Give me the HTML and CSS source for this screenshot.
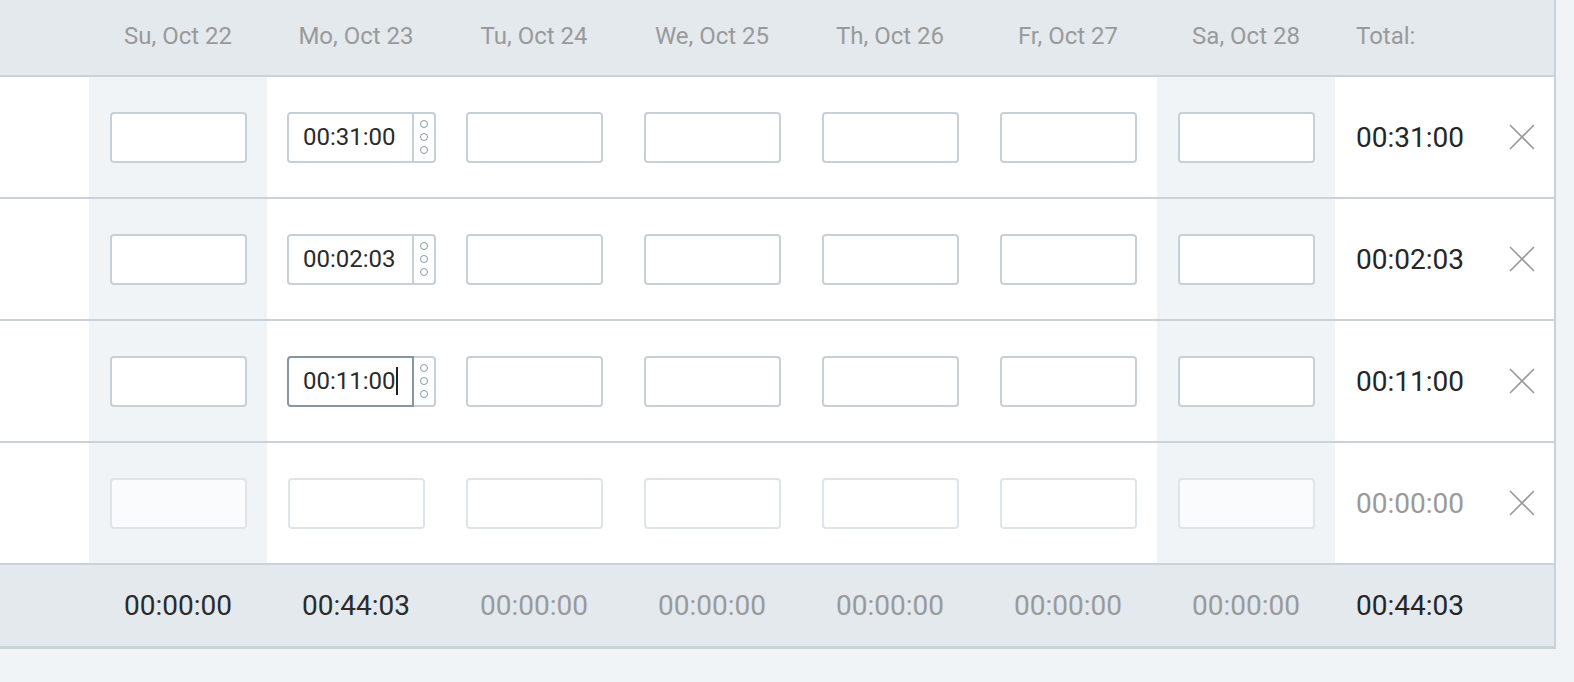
FILE: index.html
```html
<!DOCTYPE html>
<html>
<head>
  <title>Timesheet - Week</title>
  <link rel="stylesheet" href="styles.css">
</head>
<body>
  <div class="timesheet">
    <div class="ts-row ts-head">
      <div class="cell cell-name"></div>
      <div class="cell day">Su, Oct 22</div>
      <div class="cell day">Mo, Oct 23</div>
      <div class="cell day">Tu, Oct 24</div>
      <div class="cell day">We, Oct 25</div>
      <div class="cell day">Th, Oct 26</div>
      <div class="cell day">Fr, Oct 27</div>
      <div class="cell day">Sa, Oct 28</div>
      <div class="cell total">Total:</div>
      <div class="cell action"></div>
    </div>

    <div class="ts-row">
      <div class="cell cell-name"></div>
      <div class="cell day weekend"><div class="field"></div></div>
      <div class="cell day">
        <div class="field-group">
          <div class="field has-menu">00:31:00</div>
          <div class="field-menu"><span></span><span></span><span></span></div>
        </div>
      </div>
      <div class="cell day"><div class="field"></div></div>
      <div class="cell day"><div class="field"></div></div>
      <div class="cell day"><div class="field"></div></div>
      <div class="cell day"><div class="field"></div></div>
      <div class="cell day weekend"><div class="field"></div></div>
      <div class="cell total">00:31:00</div>
      <div class="cell action"><button class="remove" title="Remove"><svg width="26" height="26" viewBox="0 0 26 26"><path d="M1 1 L25 25 M25 1 L1 25" /></svg></button></div>
    </div>

    <div class="ts-row">
      <div class="cell cell-name"></div>
      <div class="cell day weekend"><div class="field"></div></div>
      <div class="cell day">
        <div class="field-group">
          <div class="field has-menu">00:02:03</div>
          <div class="field-menu"><span></span><span></span><span></span></div>
        </div>
      </div>
      <div class="cell day"><div class="field"></div></div>
      <div class="cell day"><div class="field"></div></div>
      <div class="cell day"><div class="field"></div></div>
      <div class="cell day"><div class="field"></div></div>
      <div class="cell day weekend"><div class="field"></div></div>
      <div class="cell total">00:02:03</div>
      <div class="cell action"><button class="remove" title="Remove"><svg width="26" height="26" viewBox="0 0 26 26"><path d="M1 1 L25 25 M25 1 L1 25" /></svg></button></div>
    </div>

    <div class="ts-row">
      <div class="cell cell-name"></div>
      <div class="cell day weekend"><div class="field"></div></div>
      <div class="cell day">
        <div class="field-group">
          <div class="field has-menu focused">00:11:00<span class="caret"></span></div>
          <div class="field-menu"><span></span><span></span><span></span></div>
        </div>
      </div>
      <div class="cell day"><div class="field"></div></div>
      <div class="cell day"><div class="field"></div></div>
      <div class="cell day"><div class="field"></div></div>
      <div class="cell day"><div class="field"></div></div>
      <div class="cell day weekend"><div class="field"></div></div>
      <div class="cell total">00:11:00</div>
      <div class="cell action"><button class="remove" title="Remove"><svg width="26" height="26" viewBox="0 0 26 26"><path d="M1 1 L25 25 M25 1 L1 25" /></svg></button></div>
    </div>

    <div class="ts-row ts-new">
      <div class="cell cell-name"></div>
      <div class="cell day weekend"><div class="field"></div></div>
      <div class="cell day"><div class="field"></div></div>
      <div class="cell day"><div class="field"></div></div>
      <div class="cell day"><div class="field"></div></div>
      <div class="cell day"><div class="field"></div></div>
      <div class="cell day"><div class="field"></div></div>
      <div class="cell day weekend"><div class="field"></div></div>
      <div class="cell total muted">00:00:00</div>
      <div class="cell action"><button class="remove" title="Remove"><svg width="26" height="26" viewBox="0 0 26 26"><path d="M1 1 L25 25 M25 1 L1 25" /></svg></button></div>
    </div>

    <div class="ts-row ts-foot">
      <div class="cell cell-name"></div>
      <div class="cell day">00:00:00</div>
      <div class="cell day">00:44:03</div>
      <div class="cell day muted">00:00:00</div>
      <div class="cell day muted">00:00:00</div>
      <div class="cell day muted">00:00:00</div>
      <div class="cell day muted">00:00:00</div>
      <div class="cell day muted">00:00:00</div>
      <div class="cell total">00:44:03</div>
      <div class="cell action"></div>
    </div>
  </div>
</body>
</html>
```

FILE: styles.css
```css
body {
  font-family: Roboto, 'Liberation Sans', Arial, sans-serif;
  background: #f1f4f7;
  margin: 0;
  padding: 0;
  min-height: 100vh;
  color: #2b2b2b;
}
.timesheet {
  width: 1554px;
  background: #fff;
  border-right: 2px solid #c9d2da;
}
.ts-row {
  display: grid;
  grid-template-columns: 89px repeat(7, 178px) 155px 1fr;
  height: 120px;
  border-bottom: 2px solid #c9d2da;
}
.cell {
  display: flex;
  align-items: center;
  justify-content: center;
}
.cell.weekend {
  background: #f1f4f7;
}
.cell.total {
  justify-content: flex-start;
  padding-left: 21px;
  font-size: 28px;
  color: #262626;
}
.muted,
.cell.total.muted {
  color: #9a9a9a;
}

/* header */
.ts-head {
  height: 75px;
  background: #e4e9ee;
}
.ts-head .cell {
  font-size: 24px;
  color: #9a9a9a;
  padding-bottom: 4px;
}
.ts-head .cell.total {
  font-size: 24px;
  color: #9a9a9a;
}

/* footer */
.ts-foot {
  height: 81px;
  background: #e4e9ee;
  border-bottom: 3px solid #c9d2da;
}
.ts-foot .cell {
  font-size: 28px;
}
.ts-foot .cell.muted {
  color: #9a9a9a;
}

/* inputs */
.field {
  width: 137px;
  height: 51px;
  box-sizing: border-box;
  border: 2px solid #c7cfd7;
  border-radius: 4px;
  background: #fff;
  font-size: 24px;
  color: #2b2b2b;
  display: flex;
  align-items: center;
  padding-left: 14px;
}
.field-group {
  display: flex;
  width: 149px;
  margin-left: 11px;
}
.field.has-menu {
  width: 127px;
  border-radius: 4px 0 0 4px;
}
.field.focused {
  border-color: #8796a5;
}
.caret {
  display: inline-block;
  width: 2px;
  height: 28px;
  background: #222;
}
.field-menu {
  width: 22px;
  height: 51px;
  box-sizing: border-box;
  border: 2px solid #c7cfd7;
  border-left: none;
  border-radius: 0 4px 4px 0;
  background: #fff;
  display: flex;
  flex-direction: column;
  align-items: center;
  justify-content: center;
  gap: 5px;
}
.field-menu span {
  width: 8px;
  height: 8px;
  box-sizing: border-box;
  border: 1.6px solid #8a97a4;
  border-radius: 50%;
}
.ts-new .field {
  border-color: #dfe4e9;
}
.ts-new .weekend .field {
  background: #f9fbfc;
}

/* remove button */
.remove {
  background: none;
  border: none;
  padding: 0;
  cursor: pointer;
  display: flex;
}
.remove svg path {
  stroke: #9a9a9a;
  stroke-width: 1.6;
  fill: none;
}
```
